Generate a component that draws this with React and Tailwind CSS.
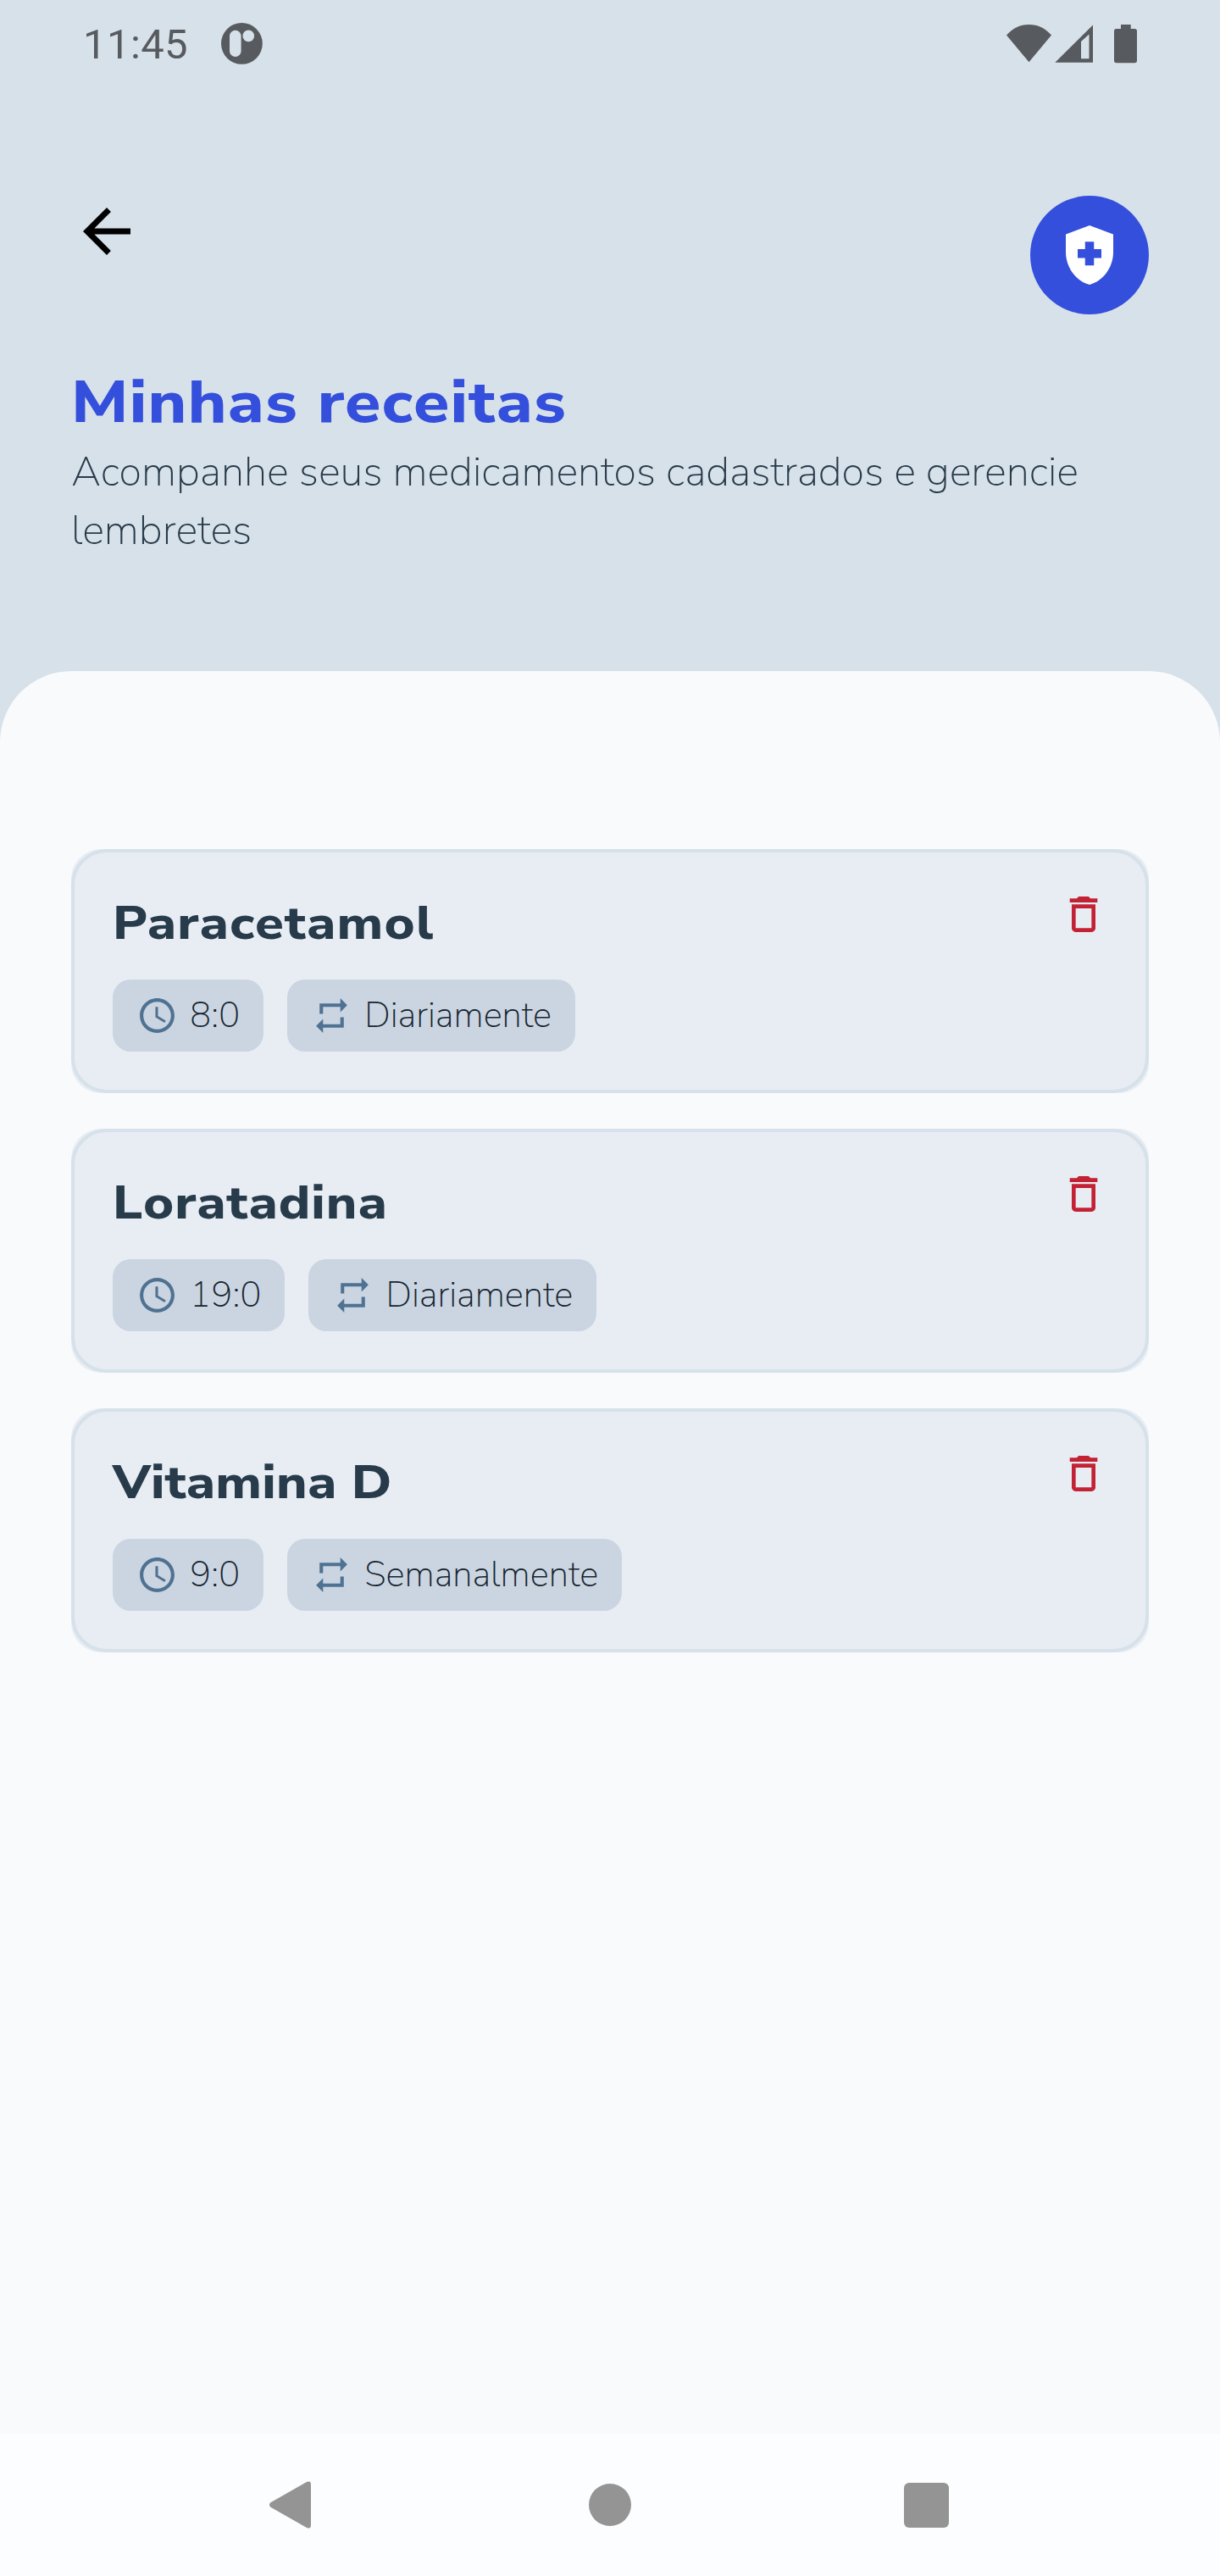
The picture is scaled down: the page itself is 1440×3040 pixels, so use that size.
const medicines = [
  { name: "Paracetamol", time: "8:0", repeat: "Diariamente", tracking: "tracking-[1.1px]" },
  { name: "Loratadina", time: "19:0", repeat: "Diariamente", tracking: "tracking-[0.9px]" },
  { name: "Vitamina D", time: "9:0", repeat: "Semanalmente", tracking: "tracking-[0.2px]" },
];

function Icon({ d, className }) {
  return (
    <svg viewBox="0 0 24 24" fill="currentColor" className={className}>
      <path d={d} />
    </svg>
  );
}

const paths = {
  back: "M20 11H7.83l5.59-5.59L12 4l-8 8 8 8 1.41-1.41L7.83 13H20v-2z",
  health:
    "M10.5 13H8v-3h2.5V7.5h3V10H16v3h-2.5v2.5h-3V13zM12 2 4 5v6.09c0 5.05 3.41 9.76 8 10.91 4.59-1.15 8-5.86 8-10.91V5l-8-3z",
  trash:
    "M6 19c0 1.1.9 2 2 2h8c1.1 0 2-.9 2-2V7H6v12zM8 9h8v10H8V9zm7.5-5-1-1h-5l-1 1H5v2h14V4h-3.5z",
  clock:
    "M11.99 2C6.47 2 2 6.48 2 12s4.47 10 9.99 10C17.52 22 22 17.52 22 12S17.52 2 11.99 2zM12 20c-4.42 0-8-3.58-8-8s3.58-8 8-8 8 3.58 8 8-3.58 8-8 8zm.5-13H11v6l5.25 3.15.75-1.23-4.5-2.67V7z",
  repeat: "M7 7h10v3l4-4-4-4v3H5v6h2V7zm10 10H7v-3l-4 4 4 4v-3h12v-6h-2v4z",
};

function StatusBar() {
  return (
    <div className="flex h-[103px] items-center pr-[98px] pl-[98px] text-[#575a5e]">
      <span className="w-[163px] pt-[3px] font-['Roboto',sans-serif] text-[49px] leading-[58px] tracking-[0.4px]">
        11:45
      </span>
      <svg viewBox="0 0 49 49" className="size-[49px]" fill="currentColor">
        <circle cx="24.4" cy="24.4" r="24.4" />
        <rect x="10" y="8.8" width="13.6" height="31.2" rx="6.8" fill="#d7e1e9" />
        <circle cx="32.3" cy="15.4" r="6.8" fill="#d7e1e9" />
      </svg>
      <svg
        viewBox="0 0 154 46"
        className="ml-auto h-[46px] w-[154px]"
        fill="currentColor"
      >
        <path d="M0 12.500C7 4.500 16 0 26.500 0S46 4.500 53 12.500L26.500 44.300Z" />
        <path fillRule="evenodd" d="M57.300 44.700 102 .5V44.700ZM88 20V40.300H97.500V11.500Z" />
        <path d="M135 0H146.700V5H151.300Q154 5 154 7.700V42.600Q154 45.300 151.300 45.300H129.700Q127 45.300 127 42.600V7.700Q127 5 129.700 5H135Z" />
      </svg>
    </div>
  );
}

function Chip({ icon, label }) {
  return (
    <div className="flex h-[85px] items-center gap-[14px] rounded-[21px] bg-[#cad5e1] px-7">
      <Icon d={icon} className="size-[49px] shrink-0 text-[#4f7292]" />
      <span className="text-[42px] leading-[57px] font-extralight whitespace-nowrap text-[#16242f]">
        {label}
      </span>
    </div>
  );
}

function MedicineCard({ name, time, repeat, tracking }) {
  return (
    <article className="h-[288px] rounded-[35px] bg-[#e8edf4]">
      <div className="flex h-full items-start justify-between rounded-[42px] border-4 border-[#d7e1e9] p-[45px]">
        <div>
          <h2
            className={`w-fit origin-left scale-x-110 text-[56px] leading-[77px] font-extrabold whitespace-nowrap text-[#283b4b] ${tracking}`}
          >
            {name}
          </h2>
          <div className="mt-7 flex gap-7">
            <Chip icon={paths.clock} label={time} />
            <Chip icon={paths.repeat} label={repeat} />
          </div>
        </div>
        <button aria-label="Excluir" className="text-[#c32234]">
          <Icon d={paths.trash} className="size-14" />
        </button>
      </div>
    </article>
  );
}

function NavigationBar() {
  return (
    <nav className="flex h-[168px] items-center bg-[#fcfdfe] pr-[320px] pl-[318px] text-[#949494]">
      <svg viewBox="0 0 49 56" className="h-14 w-[49px]" fill="currentColor">
        <path d="M1 25.500 44 1Q49-1 49 4V52Q49 57 44 55L1 30.500Q-1 28 1 25.500Z" />
      </svg>
      <span className="ml-[328px] size-[50px] rounded-full bg-[#949494]" />
      <span className="ml-auto size-[53px] rounded-[6px] bg-[#949494]" />
    </nav>
  );
}

export default function App() {
  return (
    <div className="flex h-[3040px] w-[1440px] flex-col bg-[#d7e1e9] font-['Nunito_Sans','Nunito','Noto_Sans',sans-serif]">
      <StatusBar />
      <header className="flex h-[689px] flex-col px-[84px] pt-32">
        <div className="flex h-[140px] items-start justify-between">
          <Icon d={paths.back} className="size-[84px] text-black" />
          <div className="flex size-[140px] items-center justify-center rounded-full bg-[#344fdc]">
            <Icon d={paths.health} className="size-[84px] text-white" />
          </div>
        </div>
        <h1 className="mt-14 w-fit origin-left scale-x-110 text-[70px] leading-[96px] font-extrabold tracking-[1.15px] whitespace-nowrap text-[#344fdc]">
          Minhas receitas
        </h1>
        <p className="-mt-px text-[49px] leading-[69px] font-extralight tracking-[-0.03px] text-[#283b4b]">
          Acompanhe seus medicamentos cadastrados e gerencie lembretes
        </p>
      </header>
      <main className="flex flex-1 flex-col gap-[42px] rounded-t-[84px] bg-[#f9fafc] px-[84px] pt-[210px]">
        {medicines.map((m) => (
          <MedicineCard key={m.name} {...m} />
        ))}
      </main>
      <NavigationBar />
    </div>
  );
}
